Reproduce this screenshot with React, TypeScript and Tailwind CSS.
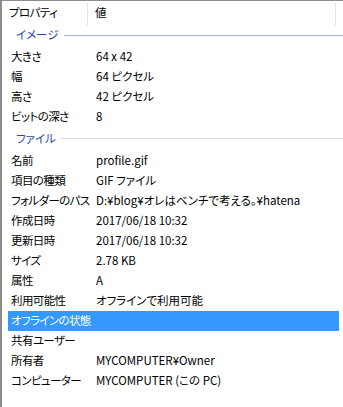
const groups: { title: string; h: string; rows: [string, string][] }[] = [
  {
    title: "イメージ",
    h: "h-[21px] pb-[3px]",
    rows: [
      ["大きさ", "64 x 42"],
      ["幅", "64 ピクセル"],
      ["高さ", "42 ピクセル"],
      ["ビットの深さ", "8"],
    ],
  },
  {
    title: "ファイル",
    h: "h-[24px] pb-[1px]",
    rows: [
      ["名前", "profile.gif"],
      ["項目の種類", "GIF ファイル"],
      ["フォルダーのパス", "D:¥blog¥オレはベンチで考える。¥hatena"],
      ["作成日時", "2017/06/18 10:32"],
      ["更新日時", "2017/06/18 10:32"],
      ["サイズ", "2.78 KB"],
      ["属性", "A"],
      ["利用可能性", "オフラインで利用可能"],
      ["オフラインの状態", ""],
      ["共有ユーザー", ""],
      ["所有者", "MYCOMPUTER¥Owner"],
      ["コンピューター", "MYCOMPUTER (この PC)"],
    ],
  },
];

function Row({ label, value, selected }: { label: string; value: string; selected?: boolean }) {
  return (
    <div
      className={
        "flex h-5 items-center ml-[6px] w-[331px] " +
        (selected ? "bg-[#3399ff] text-white" : "text-black")
      }
    >
      <div className="w-[88px] pl-[3px] whitespace-nowrap tracking-[-0.6px]">{label}</div>
      <div className="whitespace-nowrap">{value}</div>
    </div>
  );
}

export default function App() {
  return (
    <div className="w-[343px] h-[407px] bg-white border-l-2 border-[#8c8c8c] overflow-hidden font-['Noto_Sans_CJK_JP',sans-serif] text-[11.5px] [font-feature-settings:'palt'] leading-none">
      <div className="h-[26px] border-t border-[#8a8f96] flex items-center">
        <div className="w-[86px] h-[24px] pl-[7px] flex items-center border-r border-[#e5e5e5] pb-[2px] tracking-[-0.6px]">
          プロパティ
        </div>
        <div className="w-[248px] h-[24px] pl-[7px] flex items-center border-r border-[#e5e5e5] pb-[2px]">
          値
        </div>
      </div>
      {groups.map((g, gi) => (
        <div key={g.title}>
          <div className={"flex items-center pl-[14px] " + g.h}>
            <span className="text-[#2b47a6] pr-[5px]">{g.title}</span>
            <div className={"flex-1 h-px " + (gi === 0 ? "bg-[#a9b5cc]" : "bg-[#d8dee8]")} />
          </div>
          {g.rows.map(([l, v]) => (
            <Row key={l} label={l} value={v} selected={l === "オフラインの状態"} />
          ))}
        </div>
      ))}
    </div>
  );
}
